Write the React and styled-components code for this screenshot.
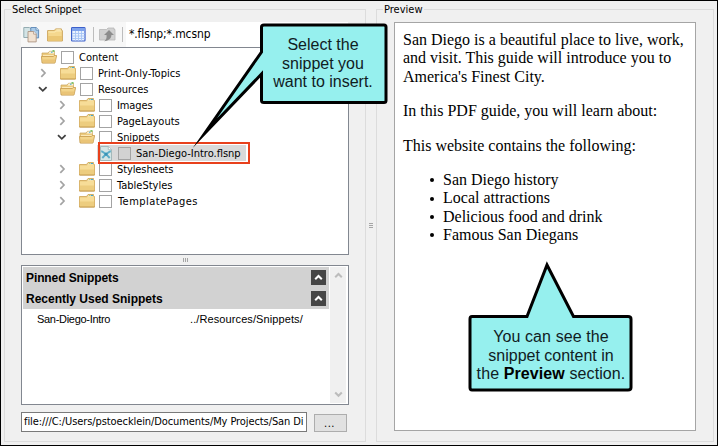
import React from 'react';
import styled, { createGlobalStyle, css } from 'styled-components';

const GlobalStyle = createGlobalStyle`
  *, *::before, *::after { box-sizing: border-box; }
  body { margin: 0; overflow: hidden; background: #f0f0f0; }
`;

const ui = css`
  font-family: 'DejaVu Sans Condensed', 'DejaVu Sans', 'Noto Sans', sans-serif;
  font-stretch: condensed;
  font-size: 11px;
  color: #000;
  white-space: nowrap;
`;

const Dialog = styled.main`
  position: relative;
  width: 718px;
  height: 446px;
  display: flex;
  border: 1px solid #000;
  background: #f0f0f0;
  padding: 8px 3px 3px;
`;

const Group = styled.fieldset`
  ${ui}
  flex: none;
  width: ${(p) => p.$width}px;
  height: 433px;
  min-width: 0;
  margin: 0;
  border: 1px solid #dcdcdc;
  padding: 12px 16px 0 ${(p) => p.$inset}px;
  display: flex;
  flex-direction: column;
`;

const Legend = styled.legend`
  height: 1px;
  line-height: 1px;
  margin-left: ${(p) => p.$shift}px;
  padding: 0 2px 0 1px;
  letter-spacing: ${(p) => p.$spacing}px;
  background: #f0f0f0;
`;

const Splitter = styled.div`
  flex: none;
  width: 10px;
  display: flex;
  align-items: center;
  justify-content: center;
`;

const Grip = styled.span`
  display: flex;
  flex-direction: ${(p) => (p.$vertical ? 'column' : 'row')};
  gap: 1px;
`;

const GripBar = styled.i`
  width: ${(p) => (p.$vertical ? 4 : 1)}px;
  height: ${(p) => (p.$vertical ? 1 : 4)}px;
  background: #a5a5a5;
`;

const Toolbar = styled.div`
  flex: none;
  display: flex;
  height: 25px;
  width: 327px;
  background: #fff;
`;

const Tools = styled.div`
  display: flex;
  align-items: center;
  width: 105px;
  padding-left: 2px;
  background: #f7f7f7;
`;

const ToolSlot = styled.span`
  display: flex;
  width: ${(p) => p.$width}px;
  flex: none;
`;

const Divider = styled.i`
  width: 1px;
  height: 15px;
  margin-right: ${(p) => p.$gap || 0}px;
  background: #bdbdbd;
`;

const Filter = styled.span`
  font-size: 12px;
  line-height: 25px;
  padding-left: 3px;
  letter-spacing: ${(p) => p.$spacing}px;
`;

const Panel = styled.div`
  flex: none;
  width: 328px;
  border: 1px solid #828790;
  background: #fff;
`;

const Tree = styled(Panel)`
  height: 208px;
  padding-top: 1px;
`;

const TreeRow = styled.div`
  display: flex;
  align-items: center;
  height: 16px;
  padding-left: ${(p) => p.$indent}px;
`;

const ArrowSlot = styled.span`
  width: 20px;
  flex: none;
  display: flex;
`;

const IconSlot = styled.span`
  width: 20px;
  flex: none;
  display: flex;
`;

const OpenIconSlot = styled(IconSlot)`
  margin-left: 2px;
`;

const Check = styled.span`
  flex: none;
  width: 13px;
  height: 13px;
  border: 1px solid #a3a3a3;
  background: ${(p) => (p.$picked ? '#d2d2d2' : '#fff')};
`;

const Label = styled.span`
  line-height: 18px;
  height: 16px;
  margin-left: ${(p) => 5 + (p.$shift || 0)}px;
  letter-spacing: ${(p) => p.$spacing}px;
`;

const Selection = styled.div`
  position: relative;
  display: flex;
  align-items: center;
  width: 149px;
  height: 16px;
  padding-left: 3px;
  background: #d9d9d9;
`;

const Highlight = styled.span`
  position: absolute;
  left: 1px;
  top: -3px;
  width: 152px;
  height: 22px;
  border: 2px solid #e8401c;
`;

const HorizontalSplit = styled.div`
  height: 10px;
  flex: none;
  display: flex;
  align-items: center;
  justify-content: center;
`;

const Recent = styled(Panel)`
  height: 140px;
  padding: 1px;
  display: flex;
  gap: 1px;
  font-family: 'Liberation Sans', Arial, sans-serif;
  font-stretch: normal;
`;

const RecentList = styled.div`
  width: 306px;
`;

const Section = styled.div`
  display: flex;
  align-items: center;
  justify-content: space-between;
  height: 21px;
  padding: 0 3px;
  background: #d2d2d2;
  font-weight: 700;
  font-size: 12px;
`;

const SectionTitle = styled.span`
  letter-spacing: ${(p) => p.$spacing}px;
`;

const Collapse = styled.span`
  width: 15px;
  height: 15px;
  background: #464646;
  display: flex;
  align-items: center;
  justify-content: center;
`;

const Entry = styled.div`
  display: grid;
  grid-template-columns: 153px 1fr;
  padding: 3px 0 0 14px;
  line-height: 15px;
  font-size: 11px;
`;

const Cell = styled.span`
  letter-spacing: ${(p) => p.$spacing}px;
`;

const Scrollbar = styled.div`
  width: 16px;
  background: #f0f0f0;
  display: flex;
  flex-direction: column;
  align-items: center;
  justify-content: space-between;
  padding: 5px 0;
`;

const PathRow = styled.div`
  display: flex;
  align-items: flex-end;
  gap: 7px;
  margin-top: 7px;
`;

const PathField = styled.div`
  width: 286px;
  height: 20px;
  border: 1px solid #7a7a7a;
  background: #fff;
  padding: 0 2px;
  line-height: 18px;
`;

const PathText = styled.div`
  letter-spacing: ${(p) => p.$spacing}px;
`;

const Browse = styled.button`
  ${ui}
  width: 33px;
  height: 18px;
  border: 1px solid #adadad;
  background: #e1e1e1;
  padding: 0 2px 0 0;
  line-height: 15px;
  letter-spacing: 0.5px;
`;

const Page = styled.article`
  flex: none;
  width: 302px;
  height: 409px;
  border: 1px solid #a5a5a5;
  background: #fff;
  padding: 8px;
  font-family: 'Liberation Serif', 'Times New Roman', serif;
  font-stretch: normal;
  font-size: 16px;
  line-height: 18.4px;
`;

const Para = styled.p`
  margin: 0 0 16px;
`;

const Bullets = styled.ul`
  margin: 0;
  padding-left: 27px;
  list-style: none;
`;

const Bullet = styled.li`
  display: flex;
  align-items: center;

  &::before {
    content: '';
    width: 4px;
    height: 4px;
    margin-right: 9px;
    border-radius: 50%;
    background: #000;
  }
`;

const Callout = styled.div`
  position: absolute;
  left: ${(p) => p.$x}px;
  top: ${(p) => p.$y}px;
  width: ${(p) => p.$w}px;
  height: ${(p) => p.$h}px;
  font: 16px/18.5px 'Liberation Sans', Arial, sans-serif;
  color: #10201f;
  text-align: center;
  white-space: nowrap;
  padding-top: ${(p) => p.$pad}px;
`;

const Bubble = styled.svg`
  position: absolute;
  inset: 0;
`;

const CalloutLine = styled.div`
  position: relative;
  padding-left: ${(p) => p.$left || 0}px;
  letter-spacing: ${(p) => p.$spacing || 0}px;
`;

const Strong = styled.b`
  color: #000;
`;

const Folder = () => (
  <svg width="16" height="14" viewBox="0 0 16 14">
    <path d="M.5 13V2.500h7l1.500-2h5.500v2h1V13z" fill="#e9c87d" stroke="#cfa552" strokeWidth=".8" />
    <path d="M9.500 1.200h4.500v1.600H8.600z" fill="#f6efd5" />
    <path d="M12 1.500h2" stroke="#3fa8d8" />
    <path d="M10 1.500h1.500" stroke="#a5cf8a" />
    <path d="M.9 3.400h6.900l1-1h6.300v10.200H.9z" fill="#f7dd98" />
    <path d="M1 7.500h14v5H1z" fill="#edcd7f" />
    <path d="M.5 13h15" stroke="#bd913f" strokeWidth=".8" />
  </svg>
);

const OpenFolder = () => (
  <svg width="16" height="14" viewBox="0 0 16 14">
    <path d="M1 12.800V3h6l1.500-1.700h5v11.500z" fill="#ecca7e" stroke="#c9a45a" strokeWidth=".7" />
    <path d="M8.700 1.600h4.500v2H7.500z" fill="#f8f1d9" />
    <path d="M10 2.200h1.500" stroke="#38a9dc" strokeWidth="1" />
    <path d="M11.500 .9h2" stroke="#62bd56" strokeWidth="1.500" />
    <path d="M2 5h11v1.500H2z" fill="#fbe9b8" />
    <path d="M.4 6.500h11.800l1.200-1h2.300L14 13H1.300z" fill="#f3d58b" stroke="#c79b4c" strokeWidth=".8" />
    <path d="M1.300 9.500h13l-.7 3H1.800z" fill="#eac477" />
  </svg>
);

const ToolFolder = () => (
  <svg width="16" height="14" viewBox="0 0 16 14">
    <path d="M.6 13V2.600H7L8.800.9h5.600v1.700h1V13z" fill="#f5d88e" stroke="#caa052" strokeWidth=".9" />
    <path d="M9.300 1.900h4.500" stroke="#f9efc9" />
    <path d="M1.200 4h7l1-1h5.600" stroke="#fdebb4" fill="none" />
    <path d="M1.100 8h13.900v4.600H1.100z" fill="#ebc775" />
  </svg>
);

const Copies = () => (
  <svg width="17" height="17" viewBox="0 0 17 17">
    <path d="M.8 1.500h5.600l2 2v8H.8z" fill="#d3e4e6" stroke="#8ba5aa" strokeWidth=".9" />
    <path d="M7.800 1.500h5.400l2.400 2.400v8H7.800z" fill="#a9cbe9" stroke="#5b86b4" strokeWidth=".9" />
    <path d="M13 1.500v2.700h2.600" fill="#e5f2fb" stroke="#5b86b4" strokeWidth=".8" />
    <path d="M5 5.500h5.800l2.400 2.400v8H5z" fill="#f1e2d2" stroke="#ad9584" strokeWidth=".9" />
    <path d="M10.600 5.500v2.600h2.600" fill="#fff" stroke="#ad9584" strokeWidth=".8" />
  </svg>
);

const GridIcon = () => (
  <svg width="15" height="15" viewBox="0 0 15 15">
    <rect x=".6" y=".6" width="13.400" height="13.400" rx=".8" fill="#e9f2ff" stroke="#3c60cb" strokeWidth="1.200" />
    <path d="M1 1h12.600v3H1z" fill="#7ea3ec" />
    <path d="M1 6.500h12.600M1 9h12.600M1 11.500h12.600M4.500 4v10M7.500 4v10M10.500 4v10" stroke="#a6c4f5" strokeWidth=".9" />
  </svg>
);

const UpFolder = () => (
  <svg width="17" height="15" viewBox="0 0 17 15">
    <path d="M.5 13V2.500h7L9 1h6v1.500h1V13z" fill="#d1d1d1" stroke="#b8b8b8" strokeWidth=".8" />
    <path d="M10 3l5 5h-2.600c0 3.200-2.400 5.600-7.200 6.200 2.300-1.600 2.600-3.400 2.300-6.200H5z" fill="#8d8d8d" />
  </svg>
);

const SnippetIcon = () => (
  <svg width="12" height="15" viewBox="0 0 12 15">
    <path d="M.5.5h8l3 3v11H.5z" fill="#d5e5e5" stroke="#9eb4b6" strokeWidth=".9" />
    <path d="M8.300.5v3.200h3.200" fill="#fff" stroke="#9eb4b6" strokeWidth=".8" />
    <path d="M1.200 5.200c1.600.2 2.600 1.800 4.800 2.900 2.200-1.100 3.200-2.700 4.800-2.900M2.300 12l3.700-3.900L9.700 12" fill="none" stroke="#5bacc7" strokeWidth="1.900" />
    <circle cx="6" cy="8.200" r="1.600" fill="#3794b8" />
  </svg>
);

const Closed = () => (
  <svg width="7" height="10" viewBox="0 0 7 10">
    <path d="M1.300 1.200L5 5 1.300 8.800" fill="none" stroke="#a3a3a3" strokeWidth="1.700" />
  </svg>
);

const Opened = () => (
  <svg width="10" height="7" viewBox="0 0 10 7">
    <path d="M1 1.200L4.800 4.800 8.600 1.200" fill="none" stroke="#404040" strokeWidth="1.800" />
  </svg>
);

const Chevron = ({ down, color = '#bcbcbc' }) => (
  <svg width="9" height="7" viewBox="0 0 9 7">
    <path d={down ? 'M1.200 1.500L4.500 4.800 7.800 1.500' : 'M1.200 5.300L4.500 2 7.800 5.300'} fill="none" stroke={color} strokeWidth="2" />
  </svg>
);

const rows = [
  { name: 'Print-Only-Topics', level: 0, sp: 0.06 },
  { name: 'Resources', level: 0, open: true, sp: 0 },
  { name: 'Images', level: 1, sp: -0.1 },
  { name: 'PageLayouts', level: 1, sp: 0 },
  { name: 'Snippets', level: 1, open: true, sp: -0.1 },
  { name: 'San-Diego-Intro.flsnp', selected: true, sp: 0 },
  { name: 'Stylesheets', level: 1, sp: -0.1 },
  { name: 'TableStyles', level: 1, sp: 0 },
  { name: 'TemplatePages', level: 1, sp: 0.45, shift: 1 },
];

function Row({ row }) {
  if (row.selected) {
    return (
      <TreeRow $indent={75}>
        <Selection>
          <ToolSlot $width={18}><SnippetIcon /></ToolSlot>
          <Check $picked />
          <Label $spacing={row.sp}>{row.name}</Label>
          <Highlight />
        </Selection>
      </TreeRow>
    );
  }
  return (
    <TreeRow $indent={row.level * 19 + (row.open ? 16 : 18)}>
      <ArrowSlot>{row.open ? <Opened /> : <Closed />}</ArrowSlot>
      {row.open ? <OpenIconSlot><OpenFolder /></OpenIconSlot> : <IconSlot><Folder /></IconSlot>}
      <Check />
      <Label $spacing={row.sp} $shift={row.shift}>{row.name}</Label>
    </TreeRow>
  );
}

function SnippetGroup() {
  return (
    <Group $width={362} $inset={16}>
      <Legend $shift={-10} $spacing={-0.15}>Select Snippet</Legend>
      <Toolbar>
        <Tools>
          <ToolSlot $width={24}><Copies /></ToolSlot>
          <ToolSlot $width={24}><ToolFolder /></ToolSlot>
          <ToolSlot $width={22}><GridIcon /></ToolSlot>
          <Divider $gap={5} />
          <ToolSlot $width={23}><UpFolder /></ToolSlot>
          <Divider />
        </Tools>
        <Filter $spacing={-0.12}>*.flsnp;*.mcsnp</Filter>
      </Toolbar>
      <Tree>
        <TreeRow $indent={19}>
          <IconSlot><OpenFolder /></IconSlot>
          <Check />
          <Label $spacing={0}>Content</Label>
        </TreeRow>
        {rows.map((row) => <Row key={row.name} row={row} />)}
      </Tree>
      <HorizontalSplit>
        <Grip><GripBar /><GripBar /><GripBar /></Grip>
      </HorizontalSplit>
      <Recent>
        <RecentList>
          <Section>
            <SectionTitle $spacing={-0.1}>Pinned Snippets</SectionTitle>
            <Collapse><Chevron color="#fff" /></Collapse>
          </Section>
          <Section>
            <SectionTitle $spacing={0}>Recently Used Snippets</SectionTitle>
            <Collapse><Chevron color="#fff" /></Collapse>
          </Section>
          <Entry>
            <Cell $spacing={-0.3}>San-Diego-Intro</Cell>
            <Cell $spacing={0.1}>../Resources/Snippets/</Cell>
          </Entry>
        </RecentList>
        <Scrollbar><Chevron /><Chevron down /></Scrollbar>
      </Recent>
      <PathRow>
        <PathField>
          <PathText $spacing={-0.09}>file:///C:/Users/pstoecklein/Documents/My Projects/San Di</PathText>
        </PathField>
        <Browse>...</Browse>
      </PathRow>
    </Group>
  );
}

function PreviewGroup() {
  return (
    <Group $width={338} $inset={17}>
      <Legend $shift={-11} $spacing={0}>Preview</Legend>
      <Page>
        <Para>San Diego is a beautiful place to live, work,<br />and visit. This guide will introduce you to<br />America's Finest City.</Para>
        <Para>In this PDF guide, you will learn about:</Para>
        <Para>This website contains the following:</Para>
        <Bullets>
          <Bullet>San Diego history</Bullet>
          <Bullet>Local attractions</Bullet>
          <Bullet>Delicious food and drink</Bullet>
          <Bullet>Famous San Diegans</Bullet>
        </Bullets>
      </Page>
    </Group>
  );
}

export default function App() {
  return (
    <>
      <GlobalStyle />
      <Dialog>
        <SnippetGroup />
        <Splitter>
          <Grip $vertical><GripBar $vertical /><GripBar $vertical /><GripBar $vertical /></Grip>
        </Splitter>
        <PreviewGroup />
        <Callout $x={189} $y={19} $w={204} $h={134} $pad={16}>
          <Bubble width="204" height="134" viewBox="0 0 204 134">
            <path d="M74 5H194Q196 5 196 7V80.500Q196 82.500 194 82.500H74Q71.500 82.500 71.500 80.500V54L15 113 71.500 32V7Q71.500 5 74 5Z" fill="#96f0ee" stroke="#000" strokeWidth="3" strokeMiterlimit="20" />
          </Bubble>
          <CalloutLine $left={62}>Select the</CalloutLine>
          <CalloutLine $left={62}>snippet you</CalloutLine>
          <CalloutLine $left={62}>want to insert.</CalloutLine>
        </Callout>
        <Callout $x={465} $y={259} $w={168} $h={134} $pad={68}>
          <Bubble width="168" height="134" viewBox="0 0 168 134">
            <path d="M6 56.500H61L81 5 107.500 56.500H162Q165 56.500 165 59V127.500Q165 130 162 130H6Q4 130 4 127.500V59Q4 56.500 6 56.500Z" fill="#96f0ee" stroke="#000" strokeWidth="3" />
          </Bubble>
          <CalloutLine $left={2} $spacing={0.1}>You can see the</CalloutLine>
          <CalloutLine $left={2}>snippet content in</CalloutLine>
          <CalloutLine $left={2} $spacing={0.1}>the <Strong>Preview</Strong> section.</CalloutLine>
        </Callout>
      </Dialog>
    </>
  );
}
